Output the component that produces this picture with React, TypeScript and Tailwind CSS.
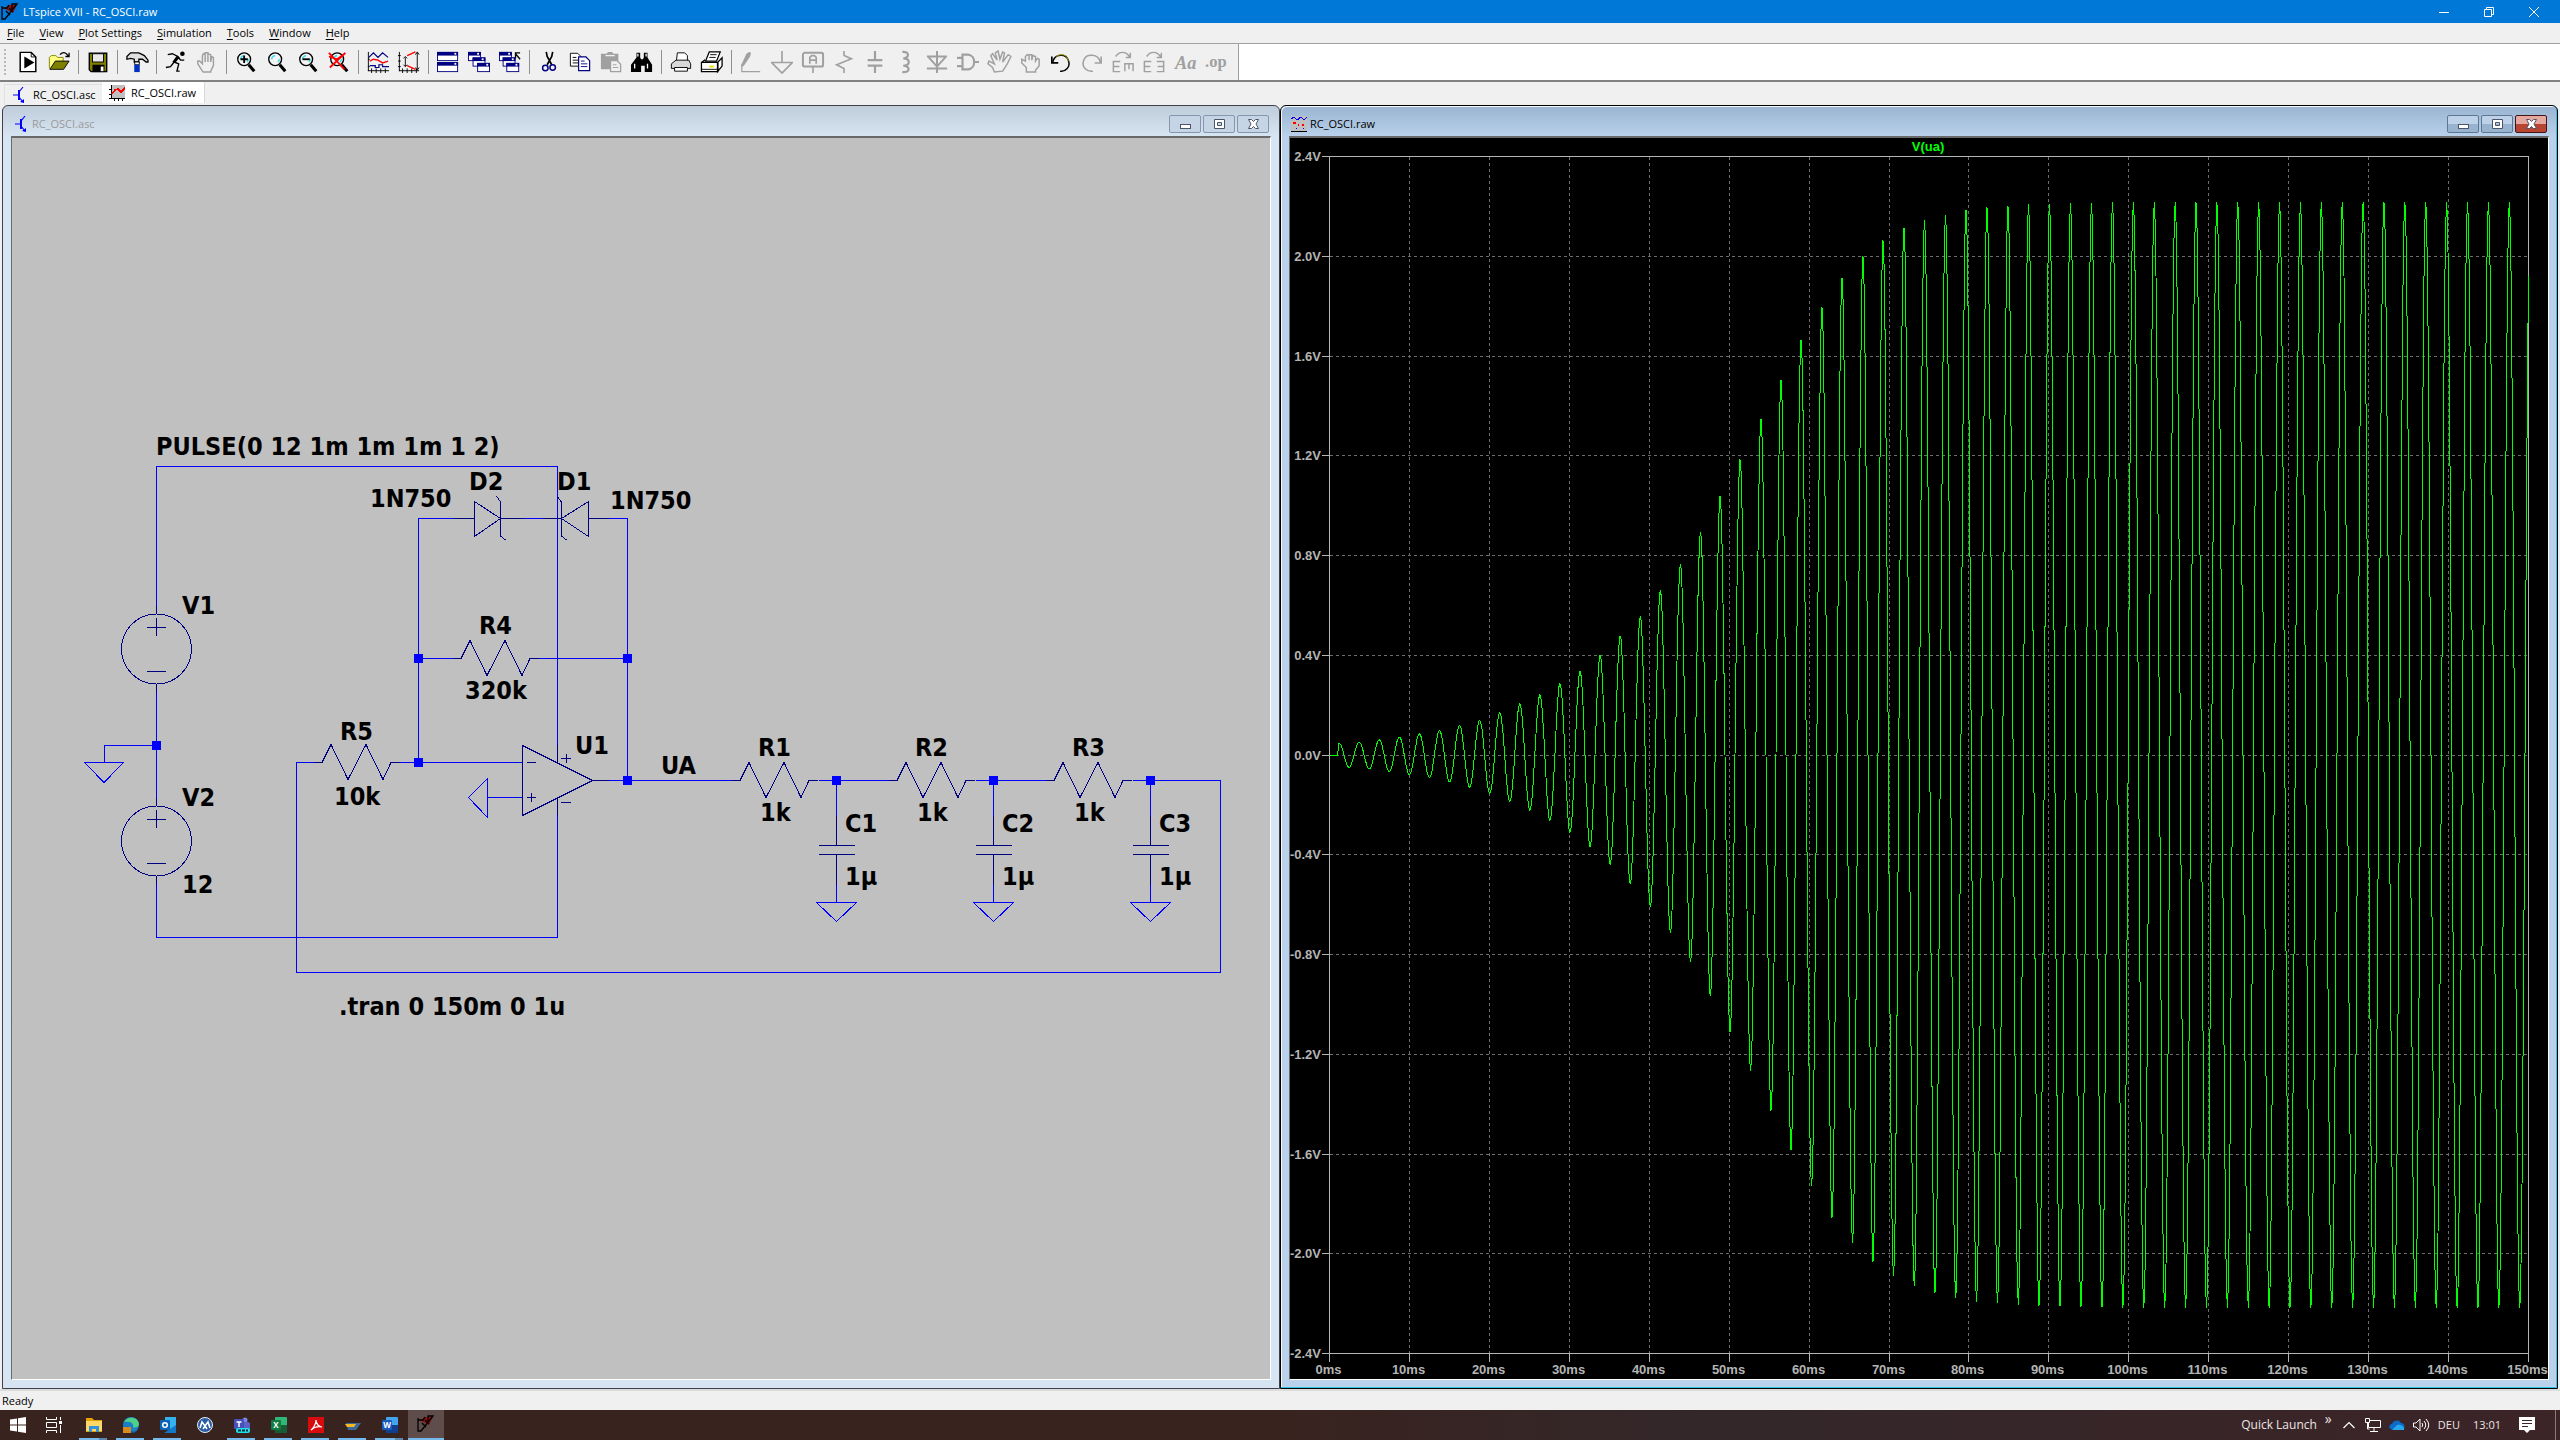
import type { ReactNode } from 'react'

/* ---------- toolbar icons, 24x24 ---------- */

const G = '#a0a0a0'
const N = '#000080'

const Magnifier = ({ children }: { children?: ReactNode }) => (
  <>
    <circle cx="10" cy="9" r="7" fill="#f4f4f4" stroke="#000" strokeWidth="1.5" />
    <path d="M6 9a5 5 0 0 1 4-4M13 12l2-3" fill="none" stroke="#3fe0e8" strokeWidth="1.6" />
    <path d="M15 15l6 7" stroke="#000" strokeWidth="3.4" />
    {children}
  </>
)

const MiniWin = ({ x, y, w = 13, h = 9 }: { x: number; y: number; w?: number; h?: number }) => (
  <>
    <rect x={x + 0.5} y={y + 0.5} width={w} height={h} fill="#fff" stroke={N} />
    <rect x={x} y={y} width={w + 1} height="4" fill={N} />
    <rect x={x + w - 3} y={y + 1} width="2" height="2" fill="#fff" />
  </>
)

const Hand = <path d="M7 22l-5-8v-3l2 0 3 3V5l1-2 2 1 0 8V2h3v10V3l3 1v8l1-6 2 1v9l-3 6v1H8z" fill="none" stroke={G} strokeWidth="1.6" />

type Tool = { name: string; art: ReactNode }

const toolGroups: Tool[][] = [
  [
    { name: 'New Schematic', art: <><path d="M3.5 1.5h12l5 5v16h-17z" fill="#fff" stroke="#000" strokeWidth="1.6" /><path d="M15.500 1.500v5h5" fill="none" stroke="#000" /><path d="M8 6l11 6.500L8 19z" fill="#000" /></> },
    { name: 'Open', art: <><path d="M1.500 19V7l2-2h5l2 2h6v4" fill="#ffff80" stroke="#808000" /><path d="M2 20L8 11h15l-6 9z" fill="#808000" stroke="#000" /><path d="M13 4c3-3 6-3 9 1M23 2v4h-4" fill="none" stroke="#000" strokeWidth="1.400" /></> },
  ],
  [
    { name: 'Save', art: <><path d="M2.500 2.500h19v20h-17l-2-2z" fill="#808000" stroke="#000" strokeWidth="1.500" /><rect x="6" y="3" width="12" height="9" fill="#e8e8e8" stroke="#000" /><rect x="6" y="15" width="13" height="8" fill="#000" /><rect x="15" y="17" width="3" height="5" fill="#fff" /></> },
  ],
  [
    { name: 'Control Panel', art: <><path d="M1 6l4-4h9l6 3 4 5v2l-2 0-4-3h-4v3H9V9L5 8 1 9z" fill="#e0e0e0" stroke="#000" strokeWidth="1.400" /><path d="M9.500 12h5v3h-5z" fill="#fff" stroke="#000" /><path d="M9 15h6v8H9z" fill="#0030c0" /></> },
  ],
  [
    { name: 'Run', art: <><circle cx="19" cy="3" r="2.500" fill="#000" /><path d="M3 4l5-1 6 3 3 4h4M15 6l-5 6M10 12l5 2-2 8h3M10 12l-4 5-5 1" fill="none" stroke="#000" strokeWidth="1.500" /><path d="M13 5l3 2-5 6-3-1z" fill="#000" /></> },
    { name: 'Halt', art: Hand },
  ],
  [
    { name: 'Zoom In', art: <Magnifier><path d="M6 9h8M10 5v8" stroke="#000" strokeWidth="2" /></Magnifier> },
    { name: 'Pan', art: <Magnifier /> },
    { name: 'Zoom Back', art: <Magnifier><path d="M6 9h8" stroke="#000" strokeWidth="2" /></Magnifier> },
    { name: 'Zoom Full Extents', art: <Magnifier><path d="M1 2l17 18M19 2L2 18M1 6l9 3 8-6" fill="none" stroke="#f00" strokeWidth="2" /></Magnifier> },
  ],
  [
    { name: 'Autorange', art: <><path d="M1.500 1v21M1 21.500h23M5 19v5M10 19v5M15 19v5M20 19v5M1 17h2M1 9h2" stroke="#000" /><path d="M2 7l5-5 5 5 5-5 6 5M3 16h6v2h4v-3h4v2h7" fill="none" stroke={N} strokeWidth="1.300" /><path d="M3 11l4-2 5 1 5 3 6-2" fill="none" stroke="#f00" strokeWidth="1.500" /></> },
    { name: 'Plot Limits', art: <><path d="M1.500 1v21M1 21.500h22M5 19v5M10 19v5M15 19v5M20 19v5M0 5h3M0 11h3M0 17h3" stroke="#000" /><path d="M8 7v10M6 8l2-2 2 2M6 15l2 2 2-2M21 2v18M19 4l2-3 2 3M19 18l2 3 2-3" fill="none" stroke="#000" /><path d="M10 5l9-4M10 16l9 4" stroke="#f00" strokeWidth="1.500" /></> },
  ],
  [
    { name: 'Tile Windows', art: <><MiniWin x={0} y={1} w={22} h={9} /><MiniWin x={0} y={12} w={22} h={10} /></> },
    { name: 'Cascade Windows', art: <><MiniWin x={0} y={1} /><MiniWin x={5} y={7} /><MiniWin x={10} y={13} /></> },
    { name: 'Close All', art: <><MiniWin x={0} y={1} /><MiniWin x={4} y={7} /><MiniWin x={8} y={13} /><path d="M23 9l-5-6M18 8V2h5" fill="none" stroke="#000" strokeWidth="1.400" /></> },
  ],
  [
    { name: 'Cut', art: <><path d="M9 1l1 5 5 9M16 1l-1 5-5 9" fill="none" stroke="#000" strokeWidth="1.800" /><circle cx="8" cy="18.500" r="3" fill="none" stroke={N} strokeWidth="1.600" /><circle cx="16" cy="18" r="3" fill="none" stroke={N} strokeWidth="1.600" /></> },
    { name: 'Copy', art: <><path d="M1.500 2.500h8l4 4v10h-12z" fill="#fff" stroke="#000" /><path d="M4 7h4M4 10h6M4 13h6" stroke="#000" /><path d="M10.500 6.500h8l4 4v11h-12z" fill="#fff" stroke={N} strokeWidth="1.300" /><path d="M13 11h4M13 14h7M13 17h7" stroke={N} /></> },
    { name: 'Paste', art: <><path d="M1 3h6l2-2h4l2 2h5v17H1z" fill={G} /><path d="M6 5h10" stroke="#f0f0f0" strokeWidth="1.500" /><path d="M11.500 10.500h7l4 4v8h-11z" fill="#f0f0f0" stroke={G} strokeWidth="1.400" /><path d="M14 15h4M14 18h6" stroke={G} /></> },
    { name: 'Find', art: <><path d="M6 2h4v5l1 2h2l1-2V2h4v5l5 8v8h-8v-7h-4v7H0v-8l6-8z" fill="#000" /><path d="M7.500 3v3M16.500 3v3M4 14v5M18 14v5" stroke="#fff" strokeWidth="1.400" /></> },
  ],
  [
    { name: 'Print', art: <><path d="M7 11l1-9h8l3 3v6" fill="#fff" stroke="#000" /><path d="M1.500 14l5-4h14l2 4v5h-21z" fill="#d8d8d8" stroke="#000" /><path d="M5 18h14v4H5z" fill="#fff" stroke="#000" /></> },
    { name: 'Print Setup', art: <><path d="M5 11l4-10h12l-4 10z" fill="#fff" stroke="#000" strokeWidth="1.300" /><path d="M10 4h7M9 7h7" stroke="#000" /><path d="M.5 12.500l4-3M18 12.500l5-5v9l-5 6zM.5 12.500h18v10h-18z" fill="#fff" stroke="#000" strokeWidth="1.400" /><path d="M9 17h5" stroke="#e8e000" strokeWidth="2" /><path d="M1 20h17" stroke="#000" /></> },
  ],
  [
    { name: 'Draw Wire', art: <><path d="M2 14L7 3l3-2 2 1-1 4-6 9-3 3z" fill={G} /><path d="M2 14v8.500h20" fill="none" stroke={G} strokeWidth="1.300" /></> },
    { name: 'Place Ground', art: <path d="M12 0v12M0 12.500h24M1 13l11 11 11-11" fill="none" stroke={G} strokeWidth="1.800" /> },
    { name: 'Label Net', art: <><rect x="1" y="2" width="22" height="15" rx="2" fill="none" stroke={G} strokeWidth="2.200" /><path d="M8.500 14V7l2-2h3l2 2v7M8.500 10h7M12 17v7" fill="none" stroke={G} strokeWidth="1.800" /></> },
    { name: 'Resistor', art: <path d="M12 0v5l8 3.500L4 15l8 4v5" fill="none" stroke={G} strokeWidth="1.800" /> },
    { name: 'Capacitor', art: <path d="M12 0v10M4 10h16M4 16h16M12 16v8" fill="none" stroke={G} strokeWidth="2.400" /> },
    { name: 'Inductor', art: <path d="M8 1c8-1 8 7 1 7 8 0 8 8 0 8 8 0 8 8-1 7" fill="none" stroke={G} strokeWidth="2.400" /> },
    { name: 'Diode', art: <path d="M12 0v24M1 6h22M3 7l9 10 9-10M1 19h22" fill="none" stroke={G} strokeWidth="2.200" /> },
    { name: 'Component', art: <path d="M6 4h6c9 1 9 15 0 16H6zM0 7.500h6M0 16.500h6M18 12h6" fill="none" stroke={G} strokeWidth="2.400" /> },
    { name: 'Move', art: <path d="M7 23l-2-5-5-4 1-3 6 3-4-9 2-2 5 7-2-8 3-2 2 9 3-8 2 1-2 10 6-8 3 2-4 8-5 8z" fill="none" stroke={G} strokeWidth="1.600" /> },
    { name: 'Drag', art: <path d="M8 23v-5l-5-5 0-4 4 2V6l2-2 2 1v5V4h3v6l1-5 3 1v5l2-3 2 1v7l-4 5v2z" fill="none" stroke={G} strokeWidth="1.600" /> },
    { name: 'Undo', art: <><path d="M3 12c2-9 14-10 17-2s-4 13-9 12" fill="none" stroke="#000" strokeWidth="1.600" /><path d="M7 6c5-4 12-2 13 5" fill="none" stroke="#b0a800" /><path d="M2 6v7h7" fill="none" stroke="#000" strokeWidth="1.800" /></> },
    { name: 'Redo', art: <path d="M21 12C19 3 6 2 3 10s4 13 10 12M22 6v7h-7" fill="none" stroke={G} strokeWidth="1.700" /> },
    { name: 'Rotate', art: <path d="M9 11.500H1.500v11H9M1.500 17H8M14 22v-8h9v8M18.500 14v6M4 6c4-6 11-6 15 0M20 2v5h-5" fill="none" stroke={G} strokeWidth="1.600" /> },
    { name: 'Mirror', art: <path d="M9 11.500H1.500v11H9M1.500 17H8M15 11.500h7.500v11H15M22 17h-6M4 6c4-6 11-6 15 0M20 2v5h-5" fill="none" stroke={G} strokeWidth="1.600" /> },
    { name: 'Text', art: <text x="1" y="20" fill={G} className="font-['Liberation_Serif',serif] text-[20px] font-bold italic">Aa</text> },
    { name: 'SPICE Directive', art: <text x="0" y="17" fill={G} className="font-['Liberation_Serif',serif] text-[18px] font-bold">.op</text> },
  ],
]

const LtLogo = ({ size = 'size-[18px]' }: { size?: string }) => (
  <svg viewBox="0 0 18 18" className={size}>
    <path d="M4 6l3-4h9l-4 8z" fill="#8b0f14" />
    <path d="M1 3v13h3L16 1h-5v5M1 5h5l2-3M5 8l4 4M8 5l4 4" fill="none" stroke="#000" strokeWidth="1.300" />
  </svg>
)

const Transistor = () => (
  <svg viewBox="0 0 12 18" className="h-[18px] w-3">
    <path d="M6 4v10" stroke="#00f" strokeWidth="2" />
    <path d="M0 9h6M6 6l4-5M6 11l4 5" fill="none" stroke="#00f" strokeWidth="1.200" />
    <path d="M11 17v-4l-4 3z" fill="#00f" />
  </svg>
)

const WaveIcon = () => (
  <svg viewBox="0 0 16 16" className="size-4" shapeRendering="crispEdges">
    <path d="M3 0h13v13H3z" fill="#c0c0c0" />
    <path d="M2.500 0v14M0 13.500h16M5 13v3M9 13v3M13 13v3M0 4h2M0 9h2" stroke="#000" />
    <path d="M3 9l3-4 3-1 3 3 4-4" fill="none" stroke="#f00" strokeWidth="1.600" />
  </svg>
)

const WaveIconSmall = () => (
  <svg viewBox="0 0 16 16" className="size-4" shapeRendering="crispEdges">
    <path d="M0 0h16v16H0z" fill="#c0c0c0" />
    <path d="M0 3l3-2 3 3 4-3 3 3 3-3" fill="none" stroke="#00f" strokeWidth="1.200" />
    <path d="M2 7h3M7 9h1M11 9h2" stroke="#f00" strokeWidth="1.500" />
    <path d="M5 12h1M12 12h1" stroke="#00f" />
    <path d="M0 15h16" stroke="#000" />
  </svg>
)

/* ---------- MDI child window ---------- */

const CaptionGlyphs = [
  { name: 'Minimize', art: <rect x="1.500" y="6.500" width="10" height="4" fill="#fff" stroke="#4d5468" /> },
  { name: 'Maximize', art: <path d="M1.500 1.500h10v9h-10zM4.500 4.500v3h4v-3z" fill="#fff" fillRule="evenodd" stroke="#4d5468" /> },
  { name: 'Close', art: <path d="M1.500 1.500h3l2 2 2-2h3L9 6l2.500 4.500h-3l-2-2-2 2h-3L4 6z" fill="#fff" stroke="#4d5468" /> },
]

function ChildWindow({ title, icon, active, children }: { title: string; icon: ReactNode; active?: boolean; children: ReactNode }) {
  return (
    <section
      className={`flex min-w-0 flex-col rounded-t-md border px-2 pb-2 ${
        active
          ? 'border-black bg-[#b9d1ea] bg-linear-to-b from-[#99b4d1] to-[#b9d1ea] to-[30px] shadow-[inset_-1px_-1px_0_#2ec4e8,inset_1px_1px_0_#f4f8fc]'
          : 'border-[#404048] bg-[#d7e4f2] bg-linear-to-b from-[#bfcddb] to-[#d7e4f2] to-[30px]'
      }`}
    >
      <header className="flex h-[30px] shrink-0 items-center pt-[6px]">
        <span className="mr-px flex w-5 justify-center">{icon}</span>
        <h2 className={active ? 'text-[11px] text-black' : 'text-[11px] text-[#9a9a9a]'}>{title}</h2>
        <div className="mr-[2px] ml-auto flex gap-[2px]">
          {CaptionGlyphs.map(({ name, art }) => (
            <button
              key={name}
              aria-label={name}
              className={`flex h-[18px] w-8 items-center justify-center rounded-[2px] border ${
                !active
                  ? 'border-[#8796b0] bg-[#c6d5e5]'
                  : name === 'Close'
                    ? 'border-[#43141a] bg-linear-to-b from-[#e6a89e] from-50% to-[#b8452f] to-50%'
                    : 'border-[#5f7693] bg-linear-to-b from-[#bdd1e8] from-50% to-[#98b3cf] to-50%'
              }`}
            >
              <svg viewBox="0 0 13 12" className="h-3 w-[13px]">{art}</svg>
            </button>
          ))}
        </div>
      </header>
      <div className="min-h-0 flex-1 border border-t-2 border-t-[#696969] border-r-white border-b-white border-l-[#696969]">
        {children}
      </div>
    </section>
  )
}

/* ---------- schematic ---------- */

const Resistor = ({ x, y }: { x: number; y: number }) => (
  <path d={`M${x - 8} ${y}h8l9-18 17 35 18-35 17 35 8-17h9`} stroke={N} />
)

const Capacitor = ({ x }: { x: number }) => (
  <>
    <path d={`M${x} 780.500v36M${x} 884v18.500M${x - 20} 902.500h40l-20 19z`} />
    <path d={`M${x} 816v29.500M${x - 18} 845.500h36M${x - 18} 854.500h36M${x} 854.500v30`} stroke={N} />
  </>
)

const Source = ({ y }: { y: number }) => (
  <path d={`M121.500 ${y}a35 35 0 1 0 70 0a35 35 0 1 0-70 0M156.500 ${y - 43}v8M156.500 ${y + 35}v8M147 ${y - 22}h19M156.500 ${y - 31}v18M147 ${y + 22}h19`} stroke={N} />
)

const labels: [number, number, string][] = [
  [156, 455, 'PULSE(0 12 1m 1m 1m 1 2)'],
  [469, 490, 'D2'],
  [557, 490, 'D1'],
  [370, 507, '1N750'],
  [610, 509, '1N750'],
  [182, 614, 'V1'],
  [479, 634, 'R4'],
  [465, 699, '320k'],
  [340, 740, 'R5'],
  [334, 805, '10k'],
  [575, 754, 'U1'],
  [661, 774, 'UA'],
  [182, 806, 'V2'],
  [182, 893, '12'],
  [758, 756, 'R1'],
  [915, 756, 'R2'],
  [1072, 756, 'R3'],
  [760, 821, '1k'],
  [917, 821, '1k'],
  [1074, 821, '1k'],
  [845, 832, 'C1'],
  [1002, 832, 'C2'],
  [1159, 832, 'C3'],
  [845, 885, '1µ'],
  [1002, 885, '1µ'],
  [1159, 885, '1µ'],
  [339, 1015, '.tran 0 150m 0 1u'],
]

const nodes = [
  [418, 658], [627, 658], [156, 745], [418, 762], [627, 780], [836, 780], [993, 780], [1150, 780],
]

function Schematic() {
  return (
    <svg viewBox="12 138 1258 1241" preserveAspectRatio="xMinYMin" className="block size-full bg-[#c0c0c0]">
      <g fill="none" stroke="#00f" shapeRendering="crispEdges">
        <path d="M156.500 606V466.500h401V745M156.500 692v106M156.500 745.500h-52v17M84.500 762.500h39l-19.500 20z" />
        <path d="M156.500 884v53.500h401V815M453 518.500h-34.500v244M609 518.500h18.500v262M524 518.500h19" />
        <path d="M418.500 658.500h36M538 658.500h89M314 762.500h-17.500v210h924v-192H1150M400 762.500h105" />
        <path d="M505 762.500h18M487.500 797.500H523M487.500 778.500v39l-19-20zM608 780.500h124M819 780.500h71M976 780.500h71M1133 780.500h18" />
        <g stroke={N}>
          <path d="M453 518.500h22M474.500 501.500v35l26-18zM496.500 496l4 6v34l5 4M500 518.500h25" />
          <path d="M543 518.500h18M588.500 501.500v35l-27-18zM557.500 497l4 5v34l5 4M588 518.500h21" />
          <path d="M522.500 745.500v70l70-35zM592 780.500h17M557.500 745v18M557.500 797v18" />
          <path d="M527 762.500h9M527 797.500h9M531.500 793v9M561 758.500h10M566.500 754v9M561 802.500h10" />
        </g>
        <Source y={649} />
        <Source y={841} />
        <Resistor x={461} y={658.5} />
        <Resistor x={322} y={762.5} />
        <Resistor x={740} y={780.5} />
        <Resistor x={897} y={780.5} />
        <Resistor x={1054} y={780.5} />
        <Capacitor x={836.5} />
        <Capacitor x={993.5} />
        <Capacitor x={1150.5} />
      </g>
      {nodes.map(([x, y]) => (
        <rect key={`${x}-${y}`} x={x - 4} y={y - 4} width="9" height="9" fill="#00f" />
      ))}
      <g className="font-['DejaVu_Sans_Condensed','DejaVu_Sans',sans-serif] text-[25px] font-bold">
        {labels.map(([x, y, text]) => (
          <text key={`${x}-${y}`} x={x} y={y}>{text}</text>
        ))}
      </g>
    </svg>
  )
}

/* ---------- waveform ---------- */

const X0 = 39.5
const X1 = 1238.5
const Y0 = 18.5
const Y1 = 1215.5
const ZERO = (Y0 + Y1) / 2
const PER_VOLT = (Y1 - Y0) / 4.8

// Positive crests of V(ua): amplitude in volts, one per period
const crests = [
  0.048, 0.051, 0.061, 0.072, 0.085, 0.097, 0.119, 0.139, 0.17, 0.204, 0.24, 0.286, 0.336, 0.4, 0.478, 0.556, 0.66,
  0.765, 0.896, 1.038, 1.185, 1.346, 1.505, 1.663, 1.795, 1.914, 2, 2.063, 2.115, 2.147, 2.167, 2.187, 2.196, 2.2,
  2.208, 2.208, 2.212, 2.212,
]
const lateCrests = [430, 450, 471, 491, 511, 532, 552, 573, 593, 614, 634.5, 655.5, 676, 697, 718, 738.5, 759.5, 780.5, 801.5, 822.5]

const crestX = (k: number) => {
  if (k < 19) return 49 + 20.08 * k
  if (k < 39) return lateCrests[k - 19]
  return 822.5 + 20.885 * (k - 38)
}
const crestV = (k: number) => crests[k] ?? 2.216

// 24 samples per period, starting on each crest so that no peak is cut off
const SAMPLES = 24

function tracePath() {
  let d = `M${X0} ${ZERO}H47.5`
  for (let k = 0; crestX(k) < X1; k++) {
    const span = crestX(k + 1) - crestX(k)
    for (let i = 0; i < SAMPLES; i++) {
      const f = i / SAMPLES
      const x = crestX(k) + span * f
      if (x > X1) break
      const amp = crestV(k) + (crestV(k + 1) - crestV(k)) * f
      d += `L${x.toFixed(1)} ${(ZERO - amp * Math.cos(2 * Math.PI * f) * PER_VOLT).toFixed(1)}`
    }
  }
  return d
}

function Plot() {
  const xs = Array.from({ length: 16 }, (_, i) => Math.round(39 + (i * 1199) / 15) + 0.5)
  const ys = Array.from({ length: 13 }, (_, i) => Math.round(18 + (i * 1197) / 12) + 0.5)
  return (
    <svg viewBox="0 0 1258 1241" preserveAspectRatio="xMinYMin" className="block size-full bg-black">
      <g shapeRendering="crispEdges" fill="none">
        <g stroke="#6c6c6c" strokeDasharray="3 3">
          {xs.slice(1, -1).map(x => <path key={x} d={`M${x} ${Y0}V${Y1}`} />)}
          {ys.slice(1, -1).map(y => <path key={y} d={`M${X0} ${y}H${X1}`} />)}
        </g>
        <g stroke="#b4b4b4">
          <path d={`M${X0} ${Y0}H${X1}V${Y1}H${X0}z`} />
          {xs.map(x => <path key={x} d={`M${x} ${Y1}v8`} />)}
          {ys.map(y => <path key={y} d={`M32 ${y}h7`} />)}
        </g>
        <path d={tracePath()} stroke="#0f0" />
      </g>
      <g fill="#b4b4b4" className="font-['Liberation_Sans',Arial,sans-serif] text-[13px] font-bold">
        {ys.map((y, i) => (
          <text key={y} x="31" y={y + 4.5} textAnchor="end">{`${((24 - i * 4) / 10).toFixed(1)}V`}</text>
        ))}
        {xs.map((x, i) => (
          <text key={x} x={x - 1} y="1236" textAnchor="middle">{`${i * 10}ms`}</text>
        ))}
        <text x="638" y="13" textAnchor="middle" fill="#0f0">V(ua)</text>
      </g>
    </svg>
  )
}

/* ---------- taskbar ---------- */

const OfficeTile = ({ back, mid, front, letter }: { back: string; mid: string; front: string; letter: string }) => (
  <>
    <rect x="4" y="0" width="12" height="16" rx="1" fill={back} />
    <rect x="4" y="8" width="12" height="8" fill={mid} />
    <rect x="0" y="3" width="10" height="10" rx="1" fill={front} />
    <text x="5" y="11" textAnchor="middle" fill="#fff" className="font-['Open_Sans',sans-serif] text-[8px] font-bold">{letter}</text>
  </>
)

const tasks: { name: string; running?: 'one' | 'many'; art: ReactNode }[] = [
  { name: 'File Explorer', running: 'many', art: <><path d="M0 1h6l2 2h8v12H0z" fill="#e8a200" /><path d="M0 4h16v10H0z" fill="#ffd766" /><path d="M3 15V9h10v6h-3v-3H6v3z" fill="#2f94dc" /></> },
  { name: 'Edge', running: 'one', art: <><circle cx="8" cy="8" r="8" fill="#1a7fc8" /><path d="M1 5C4-1 15-1 16 7c0 4-5 4-6 3 1-4-3-6-9-5z" fill="#4fd08a" /><path d="M5 9c0 4 4 7 9 5-3 3-10 3-11-3z" fill="#0d4f9a" /><rect x="0" y="10" width="8" height="6" fill="#d88a1c" /></> },
  { name: 'Outlook', running: 'one', art: <><rect x="5" y="0" width="11" height="12" fill="#35b1ef" /><path d="M4 16h12V8l-6 4z" fill="#1378c8" /><rect x="0" y="3" width="10" height="10" rx="1" fill="#0a64b8" /><circle cx="5" cy="8" r="2.300" fill="none" stroke="#fff" strokeWidth="1.500" /></> },
  { name: 'Mattermost', art: <><circle cx="8" cy="8" r="7.500" fill="#2a5ca0" stroke="#e8eef6" /><path d="M3 11l2-6 3 4 3-4 2 6M6 12l2-3 2 3" fill="none" stroke="#fff" strokeWidth="1.600" /></> },
  { name: 'Teams', running: 'one', art: <><circle cx="11" cy="3" r="2.500" fill="#7b83eb" /><rect x="6" y="5" width="10" height="10" rx="2" fill="#5b62c8" /><rect x="0" y="2" width="10" height="10" rx="1" fill="#4650b8" /><path d="M2.500 5h5M5 5v5" stroke="#fff" strokeWidth="1.500" /><rect x="2" y="11" width="14" height="5" rx="2" fill="#22e0ea" /><path d="M4 13.500h10" stroke="#083038" strokeWidth="2" strokeDasharray="3 1" /></> },
  { name: 'Excel', running: 'one', art: <OfficeTile back="#2fb877" mid="#185c37" front="#107c41" letter="X" /> },
  { name: 'Acrobat', running: 'one', art: <><rect width="16" height="16" fill="#d80c0c" /><path d="M3 13c2-1 5-6 5-10 0 4 3 7 6 7-4-1-8 0-11 3z" fill="none" stroke="#fff" strokeWidth="1.200" /></> },
  { name: 'Editor', running: 'one', art: <><path d="M1 6h15l-5 7H3z" fill="#3d6a94" /><path d="M0 7h11l-2 3H2z" fill="#f4b824" /></> },
  { name: 'Word', running: 'many', art: <OfficeTile back="#41a5ee" mid="#103f91" front="#185abd" letter="W" /> },
]

function Taskbar() {
  return (
    <footer className="flex h-[30px] shrink-0 items-stretch bg-linear-to-r from-[#38231f] from-50% via-[#33272a] via-67% to-[#3c2427] text-[11px] text-[#ebe4e3]">
      <button aria-label="Start" className="flex w-9 items-center justify-center">
        <svg viewBox="0 0 16 16" className="size-4" fill="#fff"><path d="M0 2.500l7-1v6H0zM8 1.300L16 0v7.500H8zM0 8.500h7v6l-7-1zM8 8.500h8V16l-8-1.300z" /></svg>
      </button>
      <button aria-label="Task View" className="mr-[3px] flex w-9 items-center justify-center">
        <svg viewBox="0 0 16 16" className="size-4" fill="none" stroke="#fff"><path d="M.5 0v2.500h10V0M.5 16v-2.500h10V16M.5 5.500h10v5H.5zM14.500 0v3M14.500 8v8" /><path d="M13 4h3v3h-3z" fill="#fff" stroke="none" /></svg>
      </button>
      {tasks.map(({ name, running, art }) => (
        <button key={name} aria-label={name} className="relative flex w-[37px] items-center justify-center">
          <svg viewBox="0 0 16 16" className="size-4">{art}</svg>
          {running && (
            <span className={`absolute bottom-0 left-1 h-[2px] w-7 border-[#5a87ad] bg-[#76b9ed] ${running === 'many' ? 'border-r-8' : ''}`} />
          )}
        </button>
      ))}
      <button aria-label="LTspice XVII" className="flex w-9 items-center justify-center border-b-2 border-[#76b9ed] bg-[#5e4d4a]">
        <LtLogo />
      </button>

      <div className="ml-auto flex items-center">
        <span className="text-[12px]">Quick Launch</span>
        <span className="mb-3 ml-2 text-[14px]">»</span>
        <button aria-label="Show hidden icons" className="ml-[11px] flex w-[22px] justify-start">
          <svg viewBox="0 0 12 8" className="h-2 w-3" fill="none" stroke="#fff" strokeWidth="1.200"><path d="M.5 7L6 1.500 11.500 7" /></svg>
        </button>
        <svg viewBox="0 0 16 14" className="h-[14px] w-4" fill="none" stroke="#fff"><path d="M4 2.500h11.500v7H3.500V5M9 10v3M5 13.500h8M.5.5h4v4h-4zM2.500 5v6h2" /></svg>
        <svg viewBox="0 0 16 10" className="ml-2 h-[10px] w-4"><path d="M3 9.500C-1 9 0 4 3 4c1-4 7-5 9-1 4 0 5 6 1 7z" fill="#0a6cc8" /><path d="M3 10l5-5c4-1 8 2 7 5z" fill="#28a8ea" /></svg>
        <svg viewBox="0 0 17 14" className="ml-2 h-[14px] w-[17px]" fill="none" stroke="#fff"><path d="M.5 5v4H3l4 4V1L3 5zM9 5q1.500 2 0 4M11 3q3.500 4 0 8M13 1q5.500 6 0 12" /></svg>
        <span className="ml-2">DEU</span>
        <time className="ml-[13px]">13:01</time>
        <button aria-label="Notifications" className="ml-[18px] flex">
          <svg viewBox="0 0 16 16" className="size-4"><path d="M0 0h16v13h-5l-3 3-3-3H0z" fill="#fff" /><path d="M3 3.500h10M3 6.500h10M3 9.500h6" stroke="#3c2427" /></svg>
        </button>
        <span className="mr-1 ml-5 h-[30px] border-l border-[#8a7a78]" />
      </div>
    </footer>
  )
}

/* ---------- app ---------- */

const menus = ['File', 'View', 'Plot Settings', 'Simulation', 'Tools', 'Window', 'Help']

export default function App() {
  return (
    <div className="flex h-screen flex-col overflow-hidden bg-[#f0f0f0] font-['Open_Sans','Noto_Sans',sans-serif] text-[11px] leading-4 text-black">
      <header className="flex h-[23px] shrink-0 items-center bg-[#0078d7] text-white">
        <span className="ml-px"><LtLogo /></span>
        <h1 className="ml-1">LTspice XVII - RC_OSCI.raw</h1>
        <div className="mr-1 ml-auto flex">
          <button aria-label="Minimize" className="flex w-[45px] justify-center">
            <svg viewBox="0 0 10 10" className="size-[10px]"><path d="M0 5.500h10" stroke="#fff" /></svg>
          </button>
          <button aria-label="Restore" className="flex w-[45px] justify-center">
            <svg viewBox="0 0 10 10" className="size-[10px]" fill="none" stroke="#fff"><path d="M.5 2.500h7v7h-7zM2.500 2V.5h7v7H8" /></svg>
          </button>
          <button aria-label="Close" className="flex w-[45px] justify-center">
            <svg viewBox="0 0 10 10" className="size-[10px]" stroke="#fff"><path d="M0 0l10 10M10 0L0 10" /></svg>
          </button>
        </div>
      </header>

      <nav className="flex h-[21px] shrink-0 items-center gap-[15px] border-b border-[#a0a0a0] pl-[7px]">
        {menus.map(m => (
          <button key={m}><span className="underline underline-offset-2">{m[0]}</span>{m.slice(1)}</button>
        ))}
      </nav>

      <div className="flex h-[38px] shrink-0 border-b-2 border-[#808080] bg-white">
        <div role="toolbar" aria-label="Main" className="flex items-center border-r border-[#a0a0a0] bg-[#f0f0f0] pr-[7px] pl-1">
          <span className="mr-[6px] h-[26px] border-l-2 border-dotted border-[#b8b8b8]" />
          {toolGroups.map((group, i) => (
            <div key={i} className="flex items-center">
              {i > 0 && <span className="mr-[3px] ml-1 h-6 border-l border-[#909090]" />}
              {group.map(({ name, art }) => (
                <button key={name} aria-label={name} className="flex w-[31px] justify-center">
                  <svg viewBox="0 0 24 24" className="size-[22px] overflow-visible">{art}</svg>
                </button>
              ))}
            </div>
          ))}
        </div>
      </div>

      <div role="tablist" className="flex h-[23px] shrink-0 items-start pl-1">
        <button role="tab" aria-selected="false" className="mt-[2px] flex h-[21px] w-[98px] items-center gap-2 border-t border-l border-[#e0e0e0] pl-2">
          <Transistor />
          <span>RC_OSCI.asc</span>
        </button>
        <button role="tab" aria-selected="true" className="flex h-[21px] w-[103px] items-center gap-[6px] border-r border-[#d8d8d8] bg-white pl-[7px]">
          <WaveIcon />
          <span>RC_OSCI.raw</span>
        </button>
      </div>

      <main className="grid min-h-0 flex-1 grid-cols-2 px-[2px]">
        <ChildWindow title="RC_OSCI.asc" icon={<Transistor />}>
          <Schematic />
        </ChildWindow>
        <ChildWindow title="RC_OSCI.raw" icon={<WaveIconSmall />} active>
          <Plot />
        </ChildWindow>
      </main>

      <div className="flex h-[21px] shrink-0 items-center border-t-2 border-[#dcdcdc] pl-[2px]">Ready</div>
      <Taskbar />
    </div>
  )
}
